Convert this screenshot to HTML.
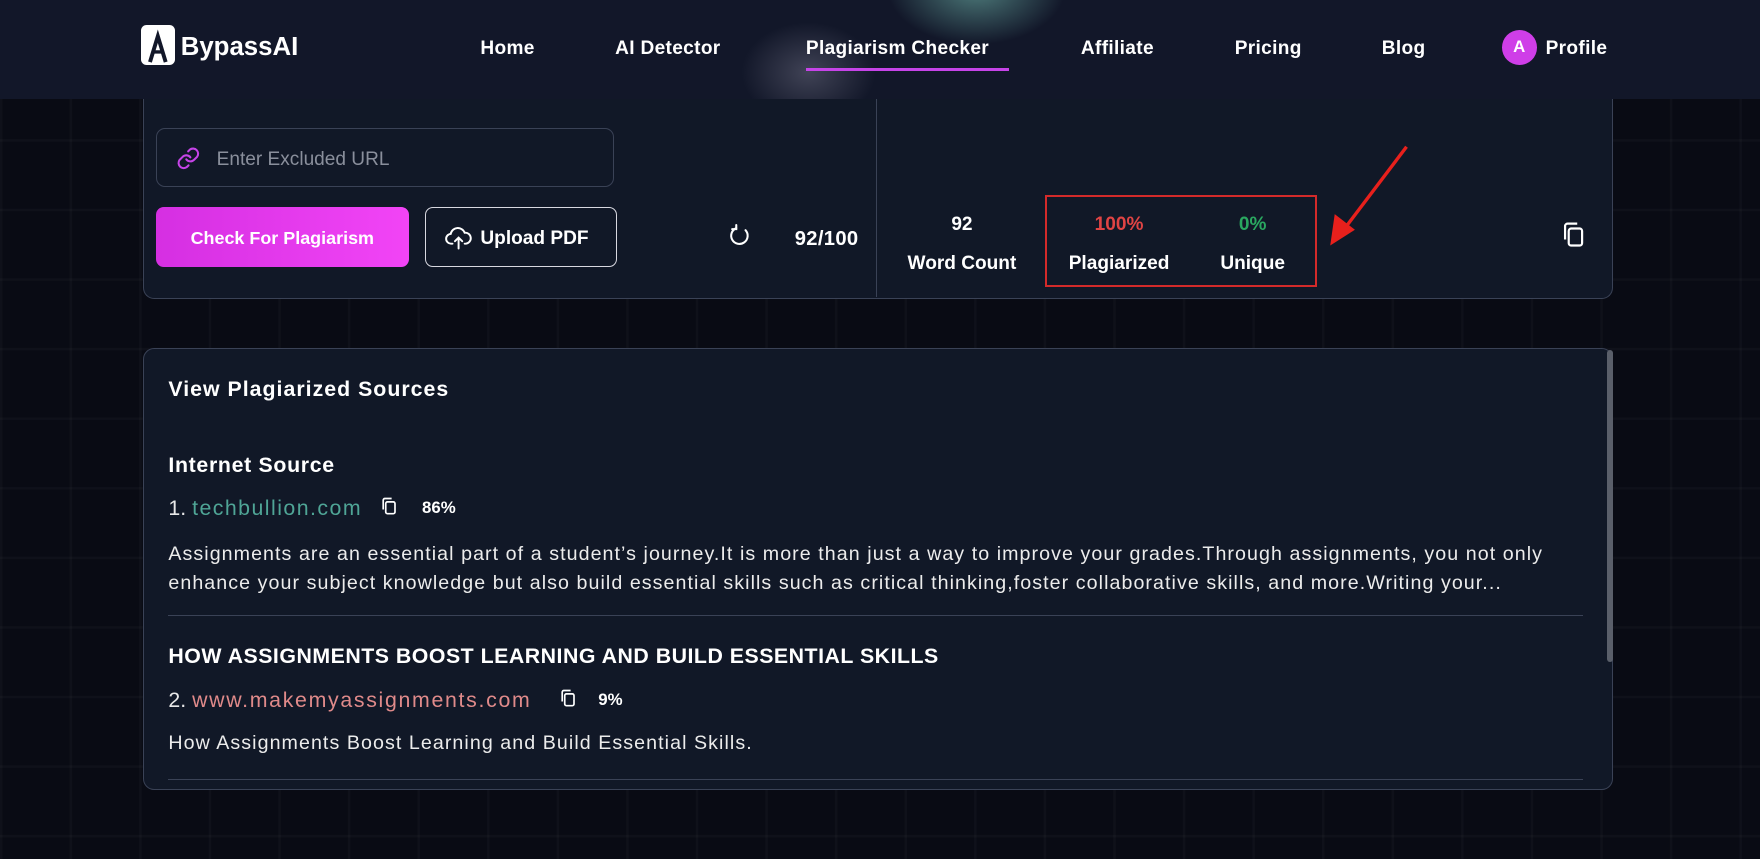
<!DOCTYPE html>
<html><head><meta charset="utf-8"><style>
*{margin:0;padding:0;box-sizing:border-box}
html,body{width:1760px;height:859px;overflow:hidden;background:#0a0c16}
#w{zoom:1.12245;width:1568px;height:765px;position:relative;font-family:"Liberation Sans",sans-serif;color:#fff;
background-color:#090b14;
background-image:linear-gradient(rgba(255,255,255,0.025) 2px,transparent 2px),linear-gradient(90deg,rgba(255,255,255,0.025) 2px,transparent 2px);
background-size:62px 62px;}
.a{position:absolute;white-space:nowrap}
#nav{position:absolute;left:0;top:0;width:1568px;height:88px;background:#121729;overflow:hidden}
.glow1{position:absolute;left:790px;top:-60px;width:160px;height:100px;border-radius:50%;background:radial-gradient(#4d7a7a,rgba(60,100,100,0) 70%)}
.glow2{position:absolute;left:660px;top:20px;width:120px;height:90px;border-radius:50%;background:radial-gradient(rgba(120,120,140,.45),rgba(80,80,100,0) 70%)}
.nv{position:absolute;top:34px;font-size:17px;font-weight:bold;letter-spacing:.3px}
.card{position:absolute;left:127px;width:1310px;background:#111827;border:1.5px solid #3a4256;border-radius:10px}
.b{font-weight:bold}
</style></head><body><div id="w">
<div class="card" style="top:70px;height:196px;border-top:none"></div>
<div class="a" style="left:780px;top:88px;width:1.5px;height:177px;background:#3a4256"></div>
<div id="nav"><div class="glow1"></div><div class="glow2"></div>
<div class="a" style="left:126px;top:22px;width:30px;height:36px;background:#fff;border-radius:5px"></div>
<svg class="a" style="left:126px;top:22px" width="30" height="36" viewBox="0 0 30 36"><path d="M8 33 L15 10 L22 33" stroke="#121729" stroke-width="3.5" fill="none"/><path d="M12 24 h7" stroke="#121729" stroke-width="3"/></svg>
<div class="a b" style="left:161px;top:29px;font-size:23px">BypassAI</div>
<div class="nv" style="left:428px">Home</div>
<div class="nv" style="left:548px">AI Detector</div>
<div class="nv" style="left:718px">Plagiarism Checker</div>
<div class="a" style="left:718px;top:61px;width:181px;height:2px;background:#c644e8"></div>
<div class="nv" style="left:963px">Affiliate</div>
<div class="nv" style="left:1100px">Pricing</div>
<div class="nv" style="left:1231px">Blog</div>
<div class="a b" style="left:1338px;top:27px;width:31px;height:31px;border-radius:50%;background:#cf3ee8;font-size:15px;text-align:center;line-height:31px">A</div>
<div class="nv" style="left:1377px">Profile</div>
</div>
<div class="a" style="left:139px;top:114px;width:408px;height:53px;border:1.5px solid #3a4256;border-radius:8px"></div>
<svg class="a" style="left:157px;top:130px" width="22" height="22" viewBox="0 0 24 24" fill="none" stroke="#c644e8" stroke-width="2" stroke-linecap="round"><path d="M10 13a5 5 0 0 0 7.5.5l3-3a5 5 0 0 0-7-7l-1.7 1.7"/><path d="M14 11a5 5 0 0 0-7.5-.5l-3 3a5 5 0 0 0 7 7l1.7-1.7"/></svg>
<div class="a" style="left:193px;top:133px;font-size:17px;color:#8a8f9c">Enter Excluded URL</div>
<div class="a b" style="left:139px;top:184px;width:225px;height:54px;border-radius:7px;background:linear-gradient(90deg,#d52fe2,#f244f6);font-size:16px;text-align:center;line-height:56px">Check For Plagiarism</div>
<div class="a" style="left:379px;top:184px;width:171px;height:54px;border-radius:7px;border:1.5px solid #d8d8e0"></div>
<svg class="a" style="left:396px;top:199px" width="26" height="26" viewBox="0 0 24 24" fill="none" stroke="#fff" stroke-width="1.6" stroke-linecap="round"><path d="M7 17H6a4 4 0 0 1-.5-8A6 6 0 0 1 17 8a4 4 0 0 1 1 9h-1"/><path d="M12 21v-9M9 15l3-3 3 3"/></svg>
<div class="a b" style="left:428px;top:203px;font-size:17px">Upload PDF</div>
<svg class="a" style="left:648px;top:200px" width="22" height="22" viewBox="0 0 24 24" fill="none" stroke="#fff" stroke-width="2" stroke-linecap="round"><path d="M18 6a8 8 0 1 1-9-2"/><path d="M9 1v4H5"/></svg>
<div class="a b" style="left:708px;top:203px;font-size:18px;letter-spacing:.3px">92/100</div>
<div class="a b" style="left:800px;top:191px;width:114px;text-align:center;font-size:17px">92</div>
<div class="a b" style="left:800px;top:225px;width:114px;text-align:center;font-size:17px">Word Count</div>
<div class="a" style="left:931px;top:174px;width:242px;height:82px;border:2px solid #d42a2a"></div>
<div class="a b" style="left:940px;top:191px;width:114px;text-align:center;font-size:17px;color:#e04444">100%</div>
<div class="a b" style="left:940px;top:225px;width:114px;text-align:center;font-size:17px">Plagiarized</div>
<div class="a b" style="left:1066px;top:191px;width:100px;text-align:center;font-size:17px;color:#2aa860">0%</div>
<div class="a b" style="left:1066px;top:225px;width:100px;text-align:center;font-size:17px">Unique</div>
<svg class="a" style="left:1175px;top:125px" width="85" height="100" viewBox="0 0 85 100"><path d="M78 6 L22 80" stroke="#e8201c" stroke-width="3"/><path d="M10 94 L14 66 L32 80 Z" fill="#e8201c"/></svg>
<svg class="a" style="left:1389px;top:196px" width="26" height="26" viewBox="0 0 24 24" fill="none" stroke="#fff" stroke-width="1.8"><rect x="8" y="7" width="11" height="14" rx="2"/><path d="M5 16V5a2 2 0 0 1 2-2h8"/></svg>

<div class="card" style="top:310px;height:394px"></div>
<div class="a" style="left:1432px;top:312px;width:5px;height:278px;background:#5a5f6a;border-radius:3px"></div>
<div class="a b" style="left:150px;top:336px;font-size:19px;letter-spacing:.9px">View Plagiarized Sources</div>
<div class="a b" style="left:150px;top:404px;font-size:19px;letter-spacing:.6px">Internet Source</div>
<div class="a" style="left:150px;top:442px;font-size:19px;color:#e8e8e8">1. <span style="color:#4fa596;letter-spacing:1.3px">techbullion.com</span></div>
<svg class="a" style="left:338px;top:442px" width="18" height="18" viewBox="0 0 24 24" fill="none" stroke="#fff" stroke-width="2"><rect x="8" y="7" width="11" height="14" rx="2"/><path d="M5 16V5a2 2 0 0 1 2-2h8"/></svg>
<div class="a b" style="left:376px;top:444px;font-size:15px">86%</div>
<div class="a" style="left:150px;top:481px;font-size:17.5px;color:#ececec;letter-spacing:.95px;line-height:26px">Assignments are an essential part of a student’s journey.It is more than just a way to improve your grades.Through assignments, you not only<br>enhance your subject knowledge but also build essential skills such as critical thinking,foster collaborative skills, and more.Writing your...</div>
<div class="a" style="left:150px;top:548px;width:1260px;height:1px;background:#3a4256"></div>
<div class="a b" style="left:150px;top:574px;font-size:19px;letter-spacing:.45px">HOW ASSIGNMENTS BOOST LEARNING AND BUILD ESSENTIAL SKILLS</div>
<div class="a" style="left:150px;top:613px;font-size:19px;color:#e8e8e8">2. <span style="color:#e08a8a;letter-spacing:1.5px">www.makemyassignments.com</span></div>
<svg class="a" style="left:497px;top:613px" width="18" height="18" viewBox="0 0 24 24" fill="none" stroke="#fff" stroke-width="2"><rect x="8" y="7" width="11" height="14" rx="2"/><path d="M5 16V5a2 2 0 0 1 2-2h8"/></svg>
<div class="a b" style="left:533px;top:615px;font-size:15px">9%</div>
<div class="a" style="left:150px;top:652px;font-size:17.5px;color:#ececec;letter-spacing:.95px">How Assignments Boost Learning and Build Essential Skills.</div>
<div class="a" style="left:150px;top:694px;width:1260px;height:1px;background:#3a4256"></div>
</div></body></html>
